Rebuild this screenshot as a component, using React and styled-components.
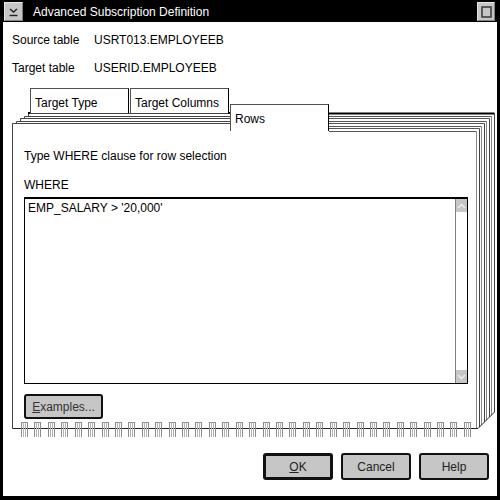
import React from 'react';
import styled, { createGlobalStyle } from 'styled-components';

const GlobalStyle = createGlobalStyle`
  html, body { margin: 0; padding: 0; background: #fff; }
  body {
    font-family: "Liberation Sans", Arial, sans-serif;
    font-size: 12px;
    color: #000;
  }
`;

const Window = styled.div`
  box-sizing: border-box;
  width: 500px;
  height: 500px;
  background: #000;
  padding: 0 3px 4px 3px;
  display: flex;
  flex-direction: column;
`;

const TitleBar = styled.div`
  height: 22px;
  flex: none;
  display: flex;
  align-items: flex-start;
  color: #fff;
`;

const FrameButton = styled.div`
  box-sizing: border-box;
  width: ${({ $w }) => $w}px;
  height: 19px;
  margin: 2px ${({ $mr }) => $mr || 0}px 0 ${({ $ml }) => $ml || 0}px;
  background: #c6c6c6;
  border-top: 1px solid #e6e6e6;
  border-left: 1px solid #e6e6e6;
  border-right: 1px solid #808080;
  border-bottom: 1px solid #808080;
  display: flex;
  align-items: center;
  justify-content: center;
`;

const Title = styled.div`
  flex: 1;
  margin-left: 10px;
  line-height: 24px;
  white-space: nowrap;
`;

const Client = styled.div`
  flex: 1;
  background: #fff;
  padding: 11px 0 0 9px;
  display: flex;
  flex-direction: column;
`;

const InfoList = styled.div`
  display: flex;
  flex-direction: column;
  gap: 14px;
`;

const InfoRow = styled.div`
  display: flex;
  line-height: 14px;
`;

const InfoLabel = styled.div`
  width: 82px;
`;

const Notebook = styled.div`
  position: relative;
  width: 483px;
  height: 350px;
  margin-top: 13px;
  display: flex;
  flex-direction: column;
`;

const FrameDrawing = styled.svg`
  position: absolute;
  left: 0;
  top: 0;
  z-index: 0;
  pointer-events: none;
`;

const TabRow = styled.div`
  position: relative;
  z-index: 1;
  height: 43px;
  flex: none;
  display: flex;
  align-items: flex-start;
  padding-left: 18px;
`;

const Tab = styled.div`
  box-sizing: border-box;
  flex: none;
  width: 99px;
  height: ${({ $active }) => ($active ? 27 : 25)}px;
  margin-top: ${({ $active }) => ($active ? 16 : 0)}px;
  margin-right: 1px;
  padding: 7px 0 0 4px;
  background: #fff;
  border: 1px solid #505050;
  border-right-color: #000;
  border-bottom: none;
  line-height: 14px;
  white-space: nowrap;
`;

const Page = styled.div`
  position: relative;
  z-index: 1;
  box-sizing: border-box;
  width: 464px;
  height: 297px;
  margin-left: 1px;
  padding: 18px 0 0 11px;
  display: flex;
  flex-direction: column;
`;

const Caption = styled.div`
  line-height: 14px;
  margin-top: ${({ $mt }) => $mt || 0}px;
`;

const EntryField = styled.div`
  box-sizing: border-box;
  width: 444px;
  height: 187px;
  margin-top: 5px;
  border: 1px solid #000;
  border-top-width: 2px;
  display: flex;
`;

const EntryText = styled.div`
  flex: 1;
  padding: 2px 0 0 3px;
  line-height: 14px;
  white-space: pre;
`;

const ScrollBar = styled.div`
  width: 11px;
  border-left: 1px solid #808080;
  display: flex;
  flex-direction: column;
  justify-content: space-between;
`;

const ScrollArrow = styled.div`
  height: 13px;
  background: #c6c6c6;
  display: flex;
  align-items: center;
  justify-content: center;
`;

const PushButton = styled.button`
  box-sizing: border-box;
  width: ${({ $w }) => $w}px;
  height: ${({ $h }) => $h}px;
  margin: 0;
  padding: 0;
  background: #c6c6c6;
  border: ${({ $default }) => ($default ? 3 : 2)}px solid #111;
  border-radius: 3px;
  font-family: "Liberation Sans", Arial, sans-serif;
  font-size: 12px;
  color: #222;
  display: flex;
  align-items: center;
  justify-content: center;
`;

const ExamplesButton = styled(PushButton)`
  margin-top: 10px;
  color: #333;
`;

const ButtonRow = styled.div`
  display: flex;
  justify-content: flex-end;
  gap: 8px;
  margin-top: 15px;
  padding-right: 8px;
`;

const STACK = Array.from({ length: 8 }, (_, i) => ({
  y: 25.5 + Math.round(2.5 * i),
  x: 482.5 - Math.round(2.5 * i),
}));

const diagY = (x) => Math.min(340.5, 340.5 - (x - 466));

const RINGS = Array.from({ length: 34 }, (_, k) => Math.round(12 + k * 13.42) + 0.5);

const NotebookFrame = () => {
  const left = STACK.slice(0, 5).map((s, j) => ({ y: s.y, x: 16.5 - 4 * j }));
  return (
    <FrameDrawing width="483" height="350" viewBox="0 0 483 350">
      {left.map((l, j) => (
        <g key={'l' + j} stroke="#444" strokeWidth="1" fill="none">
          <line x1={l.x} y1={l.y} x2={218} y2={l.y} />
          {j < 4 && <line x1={l.x} y1={l.y} x2={l.x} y2={left[j + 1].y} />}
        </g>
      ))}
      <line x1="0.5" y1="35.5" x2="0.5" y2="340.5" stroke="#444" />
      {STACK.map((s, i) => (
        <g key={'r' + i} fill="none">
          <line
            x1="317"
            y1={s.y}
            x2={s.x}
            y2={s.y}
            stroke={i === 0 ? '#000' : '#555'}
            strokeWidth={i === 0 ? 2 : 1}
          />
          <line x1={s.x} y1={s.y} x2={s.x} y2={diagY(s.x)} stroke={i % 2 ? '#888' : '#444'} />
        </g>
      ))}
      <line x1="0.5" y1="340.5" x2="466" y2="340.5" stroke="#222" />
      <line x1="466" y1="340.5" x2="483" y2="323.5" stroke="#222" />
      <rect x="16" y="24" width="2" height="2" fill="#000" />
      <rect x="216" y="24" width="2" height="2" fill="#000" />
      {RINGS.map((cx) => (
        <g key={cx} stroke="#8c8c8c" fill="none">
          <line x1={cx - 3.5} y1="334.5" x2={cx + 3.5} y2="334.5" />
          <line x1={cx - 3} y1="334.5" x2={cx - 3} y2="349" />
          <line x1={cx - 1} y1="334.5" x2={cx - 1} y2="349" stroke="#b4b4b4" />
          <line x1={cx + 1} y1="334.5" x2={cx + 1} y2="349" stroke="#b4b4b4" />
          <line x1={cx + 3} y1="334.5" x2={cx + 3} y2="349" />
        </g>
      ))}
    </FrameDrawing>
  );
};

const SysMenuGlyph = () => (
  <svg width="11" height="10" viewBox="0 0 11 10">
    <polyline points="2,2 5.5,5 9,2" fill="none" stroke="#202020" strokeWidth="1.4" />
    <line x1="1.5" y1="8.5" x2="9.5" y2="8.5" stroke="#202020" strokeWidth="1.4" />
  </svg>
);

const MaxGlyph = () => (
  <svg width="11" height="12" viewBox="0 0 11 12">
    <rect x="1" y="1" width="9" height="10" fill="#c6c6c6" stroke="#404040" strokeWidth="1.6" />
  </svg>
);

const Chevron = ({ up }) => (
  <svg width="9" height="6" viewBox="0 0 9 6">
    <polyline
      points={up ? '1,5 4.5,1.5 8,5' : '1,1 4.5,4.5 8,1'}
      fill="none"
      stroke="#f0f0f0"
      strokeWidth="1.3"
    />
  </svg>
);

export default function App() {
  return (
    <>
      <GlobalStyle />
      <Window>
        <TitleBar>
          <FrameButton $w={19} $ml={1}>
            <SysMenuGlyph />
          </FrameButton>
          <Title>Advanced Subscription Definition</Title>
          <FrameButton $w={18} $mr={2}>
            <MaxGlyph />
          </FrameButton>
        </TitleBar>
        <Client>
          <InfoList>
            <InfoRow>
              <InfoLabel>Source table</InfoLabel>
              <div>USRT013.EMPLOYEEB</div>
            </InfoRow>
            <InfoRow>
              <InfoLabel>Target table</InfoLabel>
              <div>USERID.EMPLOYEEB</div>
            </InfoRow>
          </InfoList>
          <Notebook>
            <NotebookFrame />
            <TabRow>
              <Tab>Target Type</Tab>
              <Tab>Target Columns</Tab>
              <Tab $active>Rows</Tab>
            </TabRow>
            <Page>
              <Caption>Type WHERE clause for row selection</Caption>
              <Caption $mt={15}>WHERE</Caption>
              <EntryField>
                <EntryText>EMP_SALARY &gt; '20,000'</EntryText>
                <ScrollBar>
                  <ScrollArrow>
                    <Chevron up />
                  </ScrollArrow>
                  <ScrollArrow>
                    <Chevron />
                  </ScrollArrow>
                </ScrollBar>
              </EntryField>
              <ExamplesButton $w={79} $h={25}>
                <span>
                  <u>E</u>xamples...
                </span>
              </ExamplesButton>
            </Page>
          </Notebook>
          <ButtonRow>
            <PushButton $w={70} $h={27} $default>
              <span>
                <u>O</u>K
              </span>
            </PushButton>
            <PushButton $w={70} $h={27}>Cancel</PushButton>
            <PushButton $w={70} $h={27}>Help</PushButton>
          </ButtonRow>
        </Client>
      </Window>
    </>
  );
}
